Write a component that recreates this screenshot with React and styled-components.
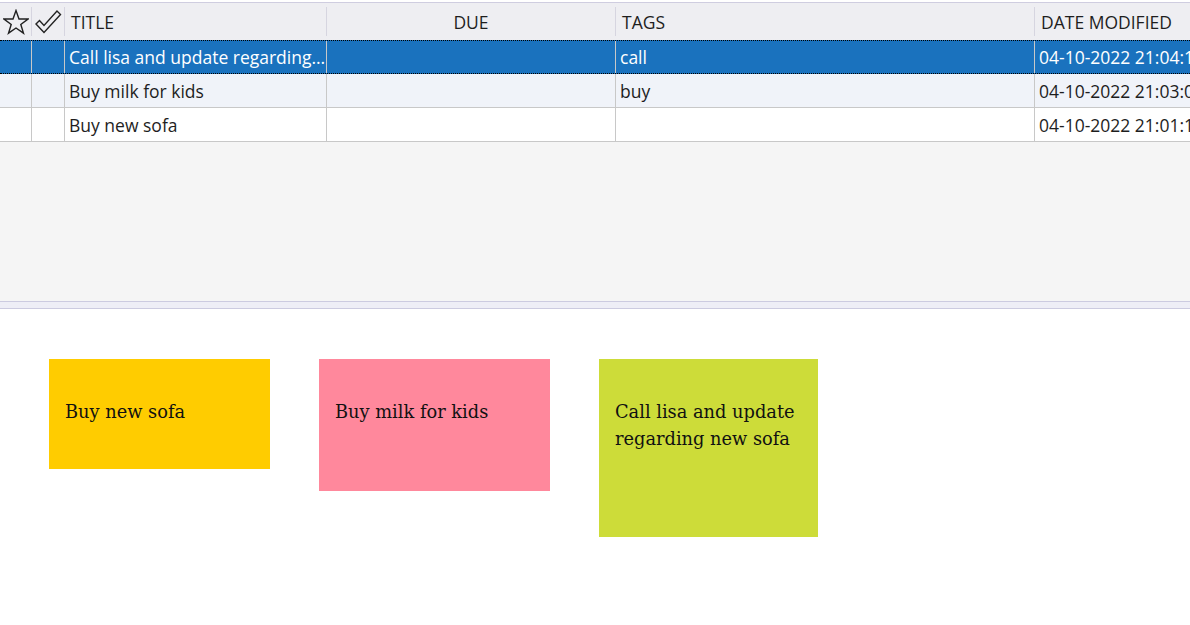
import React from "react";
import styled, { createGlobalStyle } from "styled-components";

const Global = createGlobalStyle`
  html, body { margin: 0; padding: 0; background: #fff; overflow: hidden; }
  body { font-family: "Open Sans", "Noto Sans", sans-serif; }
`;

const Page = styled.div`
  width: 1190px;
  height: 625px;
  display: flex;
  flex-direction: column;
  overflow: hidden;
`;

const GridPane = styled.div`
  margin-top: 2px;
  border-top: 1px solid #cfcde0;
  height: 298px;
  background: #f5f5f5;
  overflow: hidden;
`;

const cols = "32px 33px 262px 289px 419px 200px";

const HeaderRow = styled.div`
  display: grid;
  grid-template-columns: ${cols};
  height: 37px;
  background: #eeeef2;
  align-items: center;
`;

const HeadCell = styled.div`
  height: 29px;
  display: flex;
  align-items: center;
  justify-content: ${(p) => (p.$center || p.$icon ? "center" : "flex-start")};
  padding-left: ${(p) => (p.$center || p.$icon ? "0" : "6px")};
  border-right: ${(p) => (p.$last ? "none" : "1px solid #d6d5e0")};
  font-size: 17.5px;
  color: #1e1e1e;
  white-space: nowrap;
  box-sizing: border-box;
`;

const Row = styled.div`
  display: grid;
  grid-template-columns: ${cols};
  height: 34px;
  box-sizing: border-box;
  background: ${(p) => (p.$selected ? "#1a72be" : p.$alt ? "#f0f3f9" : "#ffffff")};
  color: ${(p) => (p.$selected ? "#ffffff" : "#1e1e1e")};
  border-top: ${(p) => (p.$selected ? "1px dotted #000" : "none")};
  border-bottom: ${(p) => (p.$selected ? "1px dotted #000" : "1px solid #c8c8c8")};
`;

const Cell = styled.div`
  display: flex;
  align-items: center;
  padding-left: 4px;
  border-right: ${(p) => (p.$last ? "none" : "1px solid #c8c8c8")};
  font-size: 17.5px;
  white-space: nowrap;
  overflow: hidden;
  box-sizing: border-box;
  min-width: 0;
`;

const CellText = styled.span`
  overflow: hidden;
  text-overflow: ellipsis;
  white-space: nowrap;
  display: block;
  max-width: 100%;
`;

const Splitter = styled.div`
  height: 6px;
  background: #eeeef6;
  border-top: 1px solid #cccbe0;
  border-bottom: 1px solid #cccbe0;
`;

const Board = styled.div`
  flex: 1;
  background: #fff;
  display: flex;
  align-items: flex-start;
  gap: 49px;
  padding: 50px 0 0 49px;
`;

const Note = styled.div`
  width: ${(p) => p.$w}px;
  height: ${(p) => p.$h}px;
  background: ${(p) => p.$bg};
  box-sizing: border-box;
  padding: 39px 16px 0 16px;
  font-family: "DejaVu Serif", "Liberation Serif", serif;
  font-size: 17.8px;
  line-height: 27px;
  color: #111;
  flex: none;
`;

const StarIcon = () => (
  <svg width="26" height="26" viewBox="0 0 26 26">
    <polygon
      points="13,1.5 16,10 25,10 17.8,15.4 20.5,24.2 13,19 5.5,24.2 8.2,15.4 1,10 10,10"
      fill="none"
      stroke="#222"
      strokeWidth="1.4"
      strokeLinejoin="miter"
    />
  </svg>
);

const CheckIcon = () => (
  <svg width="28" height="26" viewBox="0 0 28 26">
    <polygon
      points="2,15 5.5,11.5 10,16.5 23,2 26.5,5.5 10,23.5"
      fill="none"
      stroke="#222"
      strokeWidth="1.4"
      strokeLinejoin="miter"
    />
  </svg>
);

const rows = [
  { title: "Call lisa and update regarding new sofa", tags: "call", date: "04-10-2022 21:04:12", selected: true },
  { title: "Buy milk for kids", tags: "buy", date: "04-10-2022 21:03:05", alt: true },
  { title: "Buy new sofa", tags: "", date: "04-10-2022 21:01:15" },
];

const notes = [
  { text: "Buy new sofa", bg: "#ffcc00", w: 221, h: 110 },
  { text: "Buy milk for kids", bg: "#ff889c", w: 231, h: 132 },
  { text: "Call lisa and update regarding new sofa", bg: "#cddc39", w: 219, h: 178 },
];

export default function App() {
  return (
    <Page>
      <Global />
      <GridPane>
        <HeaderRow>
          <HeadCell $icon><StarIcon /></HeadCell>
          <HeadCell $icon><CheckIcon /></HeadCell>
          <HeadCell>TITLE</HeadCell>
          <HeadCell $center>DUE</HeadCell>
          <HeadCell>TAGS</HeadCell>
          <HeadCell $last>DATE MODIFIED</HeadCell>
        </HeaderRow>
        {rows.map((r, i) => (
          <Row key={i} $selected={r.selected} $alt={r.alt}>
            <Cell />
            <Cell />
            <Cell><CellText>{r.title}</CellText></Cell>
            <Cell />
            <Cell>{r.tags}</Cell>
            <Cell $last>{r.date}</Cell>
          </Row>
        ))}
      </GridPane>
      <Splitter />
      <Board>
        {notes.map((n, i) => (
          <Note key={i} $bg={n.bg} $w={n.w} $h={n.h}>{n.text}</Note>
        ))}
      </Board>
    </Page>
  );
}
